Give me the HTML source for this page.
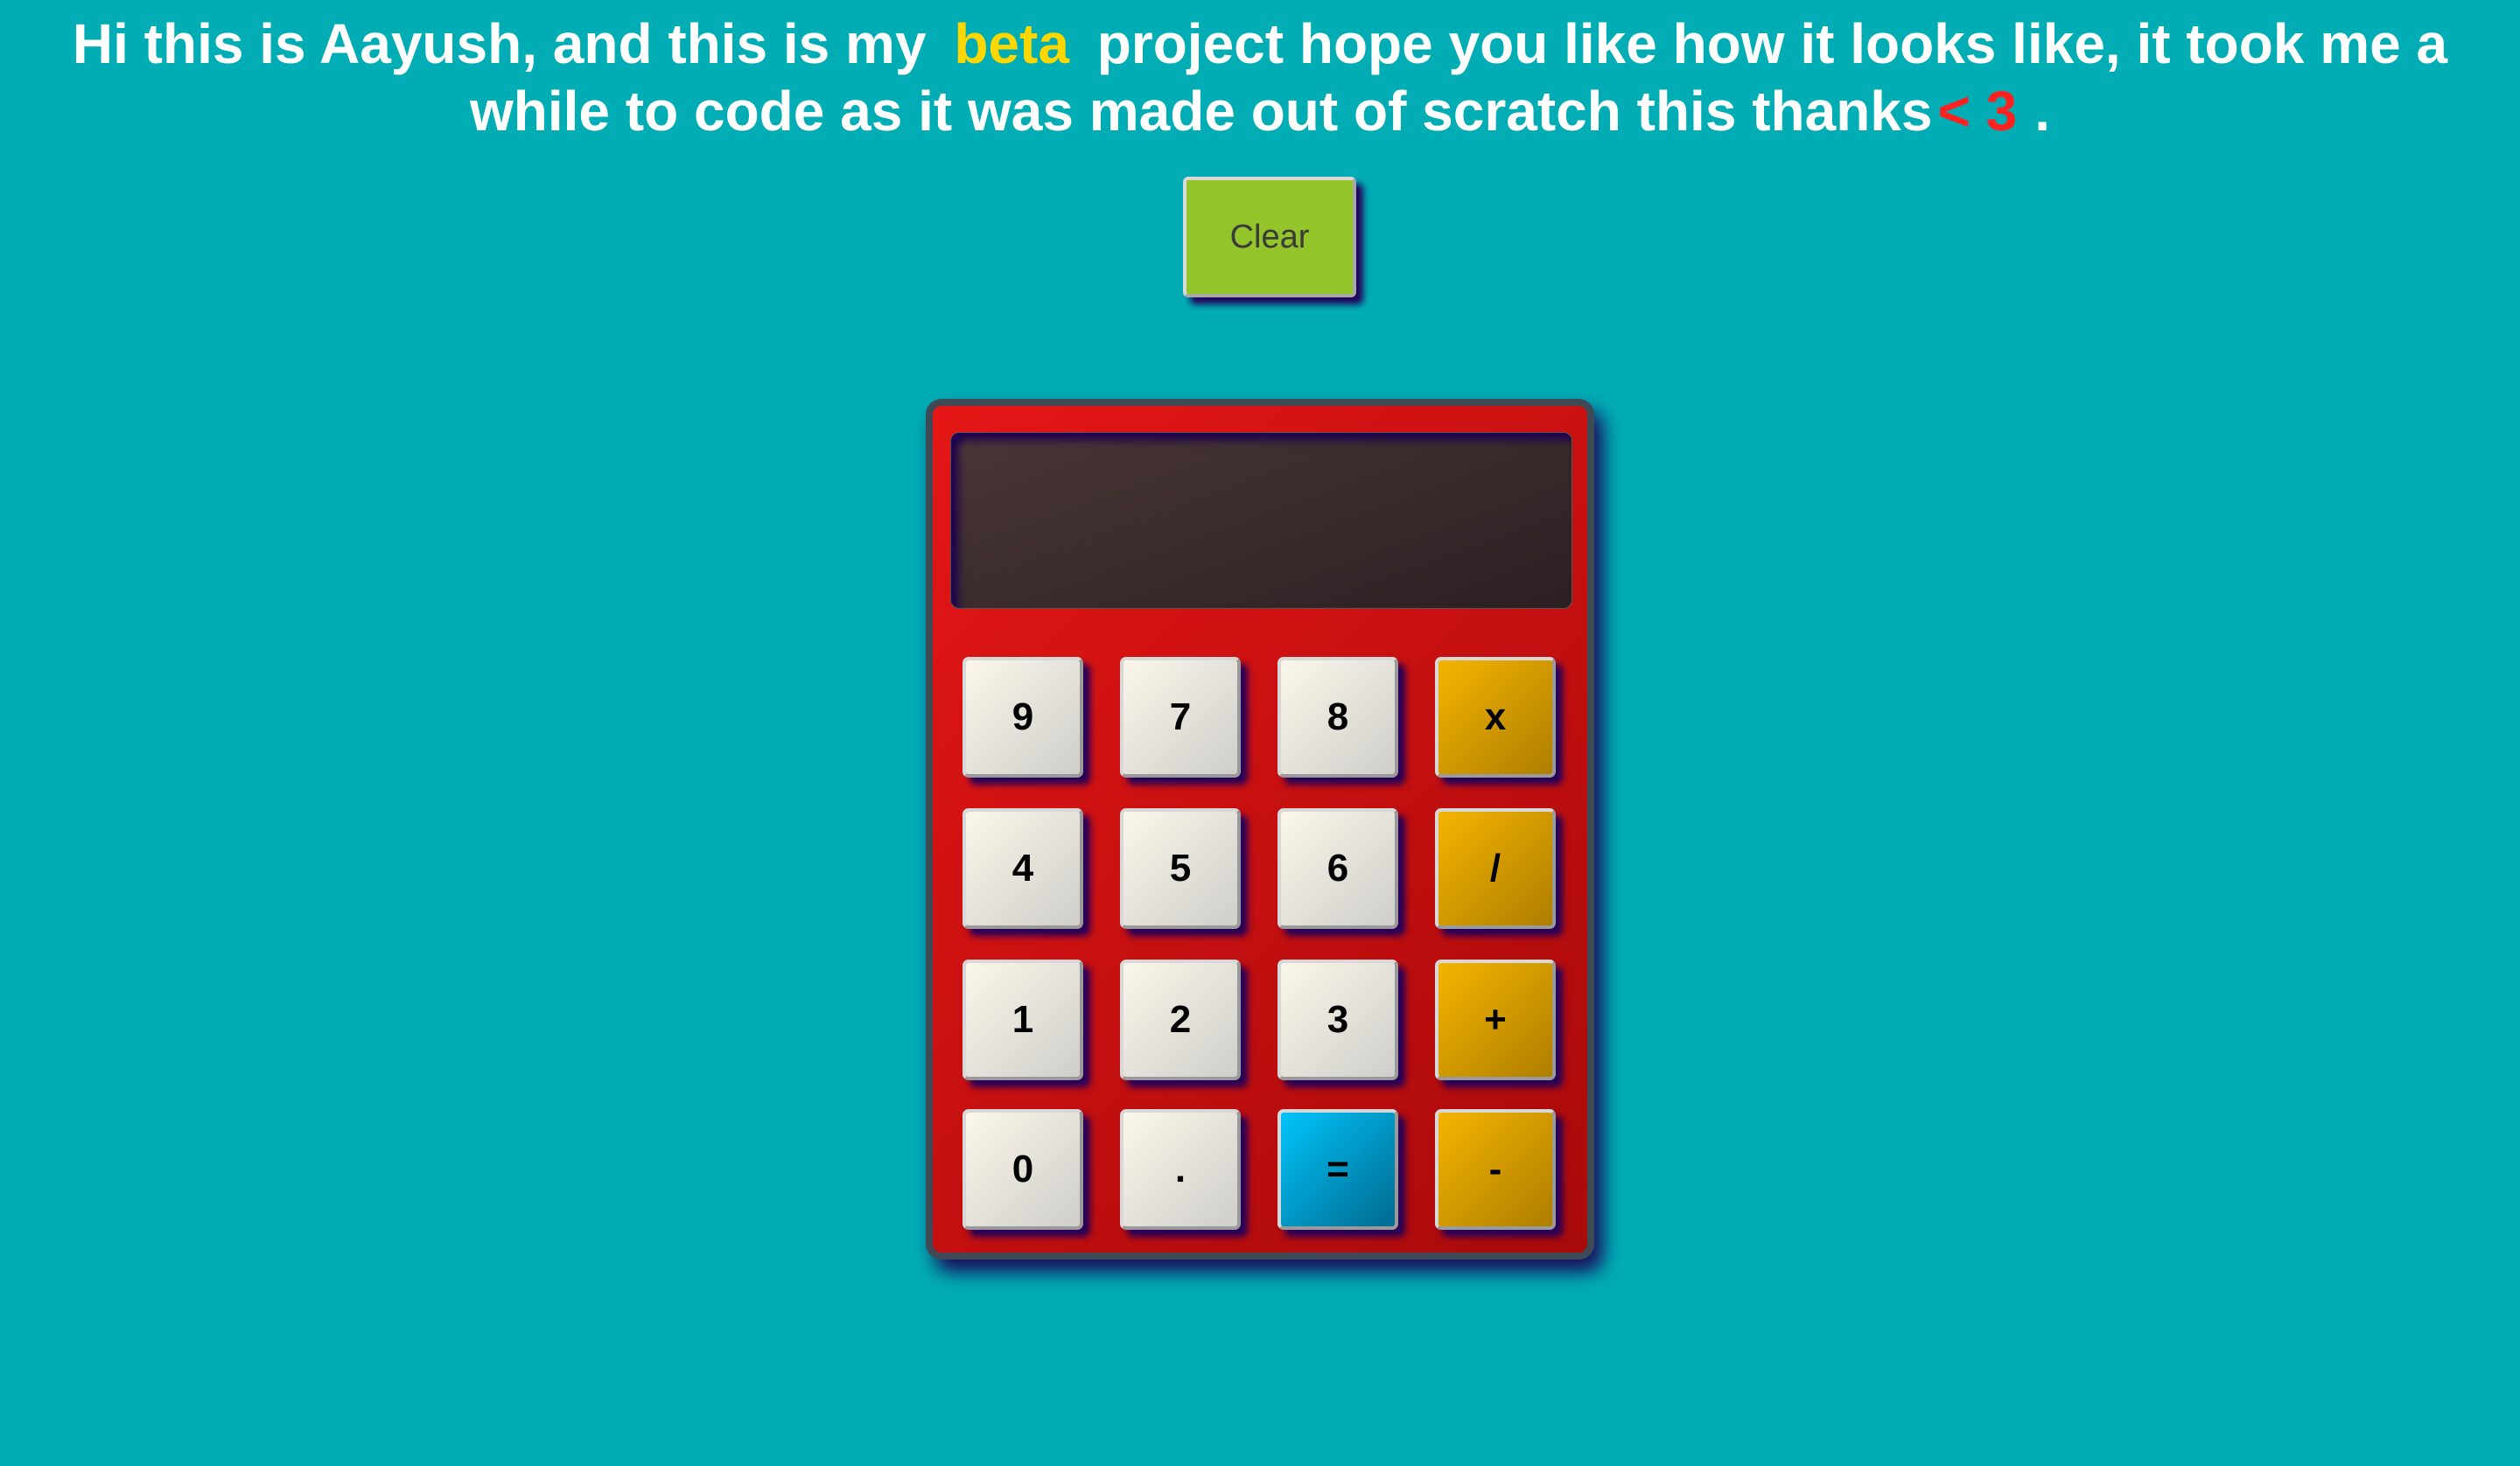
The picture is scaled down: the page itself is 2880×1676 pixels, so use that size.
<!DOCTYPE html>
<html><head><meta charset="utf-8"><style>
html,body{margin:0;padding:0;width:2880px;height:1676px;background:#00adb5;overflow:hidden;font-family:"Liberation Sans",Arial,sans-serif}
h1{position:absolute;left:60px;top:12px;width:2760px;margin:0;text-align:center;color:#fff;font-weight:bold;font-size:64px;line-height:77px}
.beta{color:#ffd700;padding:0 14px}
.heart{color:#ff2020;padding:0 20px 0 6px}
.clear{position:absolute;left:1352px;top:202px;width:198px;height:138px;box-sizing:border-box;background:#93c42a;border:4px solid #d8d8d8;border-right-color:#a8a8a8;border-bottom-color:#a8a8a8;border-radius:6px;box-shadow:8px 8px 8px #22005a;color:#3a3a3a;font-size:38px;display:flex;align-items:center;justify-content:center}
.calc{position:absolute;left:1058px;top:456px;width:764px;height:984px;box-sizing:border-box;border:8px solid #3e4a55;border-radius:18px;background:linear-gradient(135deg,#e51616,#a80a0a);box-shadow:10px 14px 22px #1a0a5a}
.screen{position:absolute;left:20px;top:30px;width:711px;height:202px;box-sizing:border-box;border:1px solid #555;border-radius:10px;background:linear-gradient(160deg,#4a3636,#2c2022);box-shadow:inset 8px 8px 10px #1e0050}
.k{position:absolute;width:138px;height:138px;box-sizing:border-box;border:4px solid #d8d8d8;border-right-color:#9a9a9a;border-bottom-color:#9a9a9a;border-radius:7px;background:linear-gradient(135deg,#fbf6e9,#cfcecb);box-shadow:8px 8px 8px #22005a;display:flex;align-items:center;justify-content:center;font-weight:bold;font-size:44px;color:#000}
.o{background:linear-gradient(135deg,#f4b400,#ae7e00)}
.b{background:linear-gradient(135deg,#00c4fa,#006a90)}
</style></head><body>
<h1>Hi this is Aayush, and this is my <span class="beta">beta</span> project hope you like how it looks like, it took me a while to code as it was made out of scratch this thanks<span class="heart">&lt; 3</span>.</h1>
<div class="clear">Clear</div>
<div class="calc">
<div class="screen"></div>
<div class="k" style="left:34px;top:287px">9</div>
<div class="k" style="left:214px;top:287px">7</div>
<div class="k" style="left:394px;top:287px">8</div>
<div class="k o" style="left:574px;top:287px">x</div>
<div class="k" style="left:34px;top:460px">4</div>
<div class="k" style="left:214px;top:460px">5</div>
<div class="k" style="left:394px;top:460px">6</div>
<div class="k o" style="left:574px;top:460px">/</div>
<div class="k" style="left:34px;top:633px">1</div>
<div class="k" style="left:214px;top:633px">2</div>
<div class="k" style="left:394px;top:633px">3</div>
<div class="k o" style="left:574px;top:633px">+</div>
<div class="k" style="left:34px;top:804px">0</div>
<div class="k" style="left:214px;top:804px">.</div>
<div class="k b" style="left:394px;top:804px">=</div>
<div class="k o" style="left:574px;top:804px">-</div>
</div>
</body></html>
